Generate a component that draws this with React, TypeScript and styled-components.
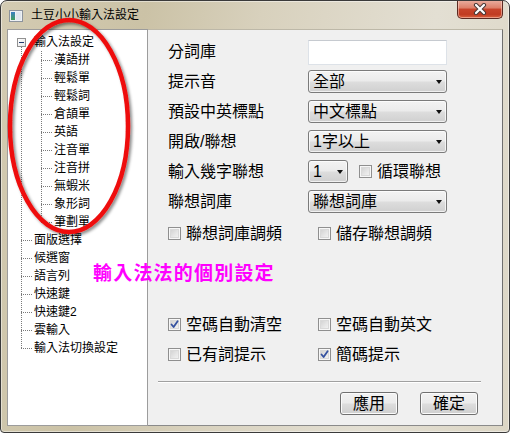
import React from 'react'
import styled, { createGlobalStyle } from 'styled-components'

const GlobalStyle = createGlobalStyle`
    html, body {
        margin: 0;
        padding: 0;
        background: #ffffff;
    }
    body {
        font-family: "Liberation Sans", "Noto Sans CJK TC", "Noto Sans CJK SC", sans-serif;
        color: #000;
    }
    * {
        box-sizing: border-box;
    }
`

const FONT = `"Liberation Sans", "Noto Sans CJK TC", "Noto Sans CJK SC", sans-serif`

const SWindow = styled.div`
    position: relative;
    width: 510px;
    height: 433px;
    border: 1px solid #3a3a3a;
    border-radius: 7px 7px 4px 4px;
    background: linear-gradient(100deg, #d3cbb2 0%, #cbc2a6 25%, #d8d1bd 45%, #e3dfd3 75%, #dcd6c5 100%);
    box-shadow: inset 0 0 0 1px rgba(255, 255, 255, 0.45);
    display: flex;
    flex-direction: column;
    overflow: hidden;
`

const STitleBar = styled.div`
    height: 28px;
    display: flex;
    align-items: flex-start;
    padding-left: 7px;
    flex-shrink: 0;
`

const STitleIcon = styled.svg`
    margin-top: 7px;
    width: 16px;
    height: 16px;
`

const STitle = styled.div`
    margin: 6px 0 0 7px;
    font-family: ${FONT};
    font-size: 12px;
    line-height: 17px;
    color: #000;
`

const SCloseButton = styled.div`
    margin: -1px 6px 0 auto;
    width: 46px;
    height: 19px;
    border: 1px solid #5b2a22;
    border-top: none;
    border-radius: 0 0 5px 5px;
    background: linear-gradient(#eab0a2 0%, #dc7e68 45%, #c8442b 50%, #c13b22 80%, #d9623f 100%);
    box-shadow: inset 0 0 0 1px rgba(255, 220, 210, 0.5);
    display: flex;
    align-items: center;
    justify-content: center;
`

const SBody = styled.div`
    flex: 1;
    display: flex;
    margin: 0 6px 6px 6px;
    min-height: 0;
`

const STree = styled.div`
    width: 141px;
    background: #ffffff;
    border: 1px solid #9c9c9c;
    padding-top: 3px;
    font-family: ${FONT};
    font-size: 12px;
`

const STopList = styled.div`
    position: relative;
    &::before {
        content: '';
        position: absolute;
        left: 13px;
        top: 14px;
        bottom: 9px;
        border-left: 1px dotted #7a7a7a;
    }
`

const SChildList = styled.div`
    position: relative;
    &::before {
        content: '';
        position: absolute;
        left: 33px;
        top: 0;
        bottom: 9px;
        border-left: 1px dotted #7a7a7a;
    }
`

const SRow = styled.div<{ $level: number; $root?: boolean }>`
    position: relative;
    height: 18px;
    line-height: 18px;
    white-space: nowrap;
    padding-left: ${(p) => (p.$level === 0 ? 26 : 46)}px;
    &::before {
        content: '';
        display: ${(p) => (p.$root ? 'none' : 'block')};
        position: absolute;
        top: 9px;
        left: ${(p) => (p.$level === 0 ? 13 : 33)}px;
        width: ${(p) => (p.$level === 0 ? 11 : 11)}px;
        border-top: 1px dotted #7a7a7a;
    }
`

const SExpander = styled.span`
    position: absolute;
    left: 9px;
    top: 5px;
    width: 9px;
    height: 9px;
    border: 1px solid #919191;
    background: linear-gradient(135deg, #ffffff, #e6e6e6);
    z-index: 1;
    &::after {
        content: '';
        position: absolute;
        left: 1px;
        top: 3px;
        width: 5px;
        height: 1px;
        background: #1e3a6e;
    }
`

const SPanel = styled.div`
    flex: 1;
    display: flex;
    flex-direction: column;
    background: #f0f0f0;
    border-top: 1px solid #bdb8a8;
    border-right: 1px solid #6f6f6f;
    border-bottom: 1px solid #8a8a8a;
    padding: 10px 0 10px 20px;
    font-family: ${FONT};
    font-size: 16px;
`

const SFormGrid = styled.div`
    display: grid;
    grid-template-columns: 140px 139px;
    grid-auto-rows: 23px;
    row-gap: 7px;
    align-items: center;
`

const SLabel = styled.div`
    line-height: 23px;
    white-space: nowrap;
`

const STextInput = styled.div`
    align-self: start;
    height: 25px;
    background: #ffffff;
    border: 1px solid #dde2e8;
    border-top-color: #c6cad0;
`

const SSelect = styled.div<{ $width?: number }>`
    position: relative;
    width: ${(p) => p.$width ?? 139}px;
    height: 23px;
    border: 1px solid #7b7b7b;
    border-radius: 3px;
    background: linear-gradient(#f3f3f3 0%, #ebebeb 48%, #dddddd 52%, #d0d0d0 100%);
    box-shadow: inset 0 0 0 1px rgba(255, 255, 255, 0.7);
    padding-left: 4px;
    line-height: 21px;
    white-space: nowrap;
    &::after {
        content: '';
        position: absolute;
        right: 4px;
        top: 9px;
        border-left: 3.5px solid transparent;
        border-right: 3.5px solid transparent;
        border-top: 4px solid #111;
    }
`

const SInline = styled.div`
    display: flex;
    align-items: center;
    gap: 11px;
    white-space: nowrap;
`

const SCheckRow = styled.label`
    display: flex;
    align-items: center;
    gap: 5px;
    height: 17px;
    line-height: 17px;
    white-space: nowrap;
`

const SBox = styled.span`
    position: relative;
    width: 13px;
    height: 13px;
    flex-shrink: 0;
    border: 1px solid #8f8f8f;
    background: linear-gradient(135deg, #cbcbcb 0%, #e8e8e8 60%, #f6f6f6 100%);
    box-shadow: inset 0 0 0 1px #f7f7f7, inset 0 0 0 2px #d9d9d9;
    svg {
        position: absolute;
        left: 0;
        top: 0;
    }
`

const SCheckGrid = styled.div<{ $gap: number }>`
    display: grid;
    grid-template-columns: 150px auto;
    row-gap: ${(p) => p.$gap}px;
`

const SBottom = styled.div`
    margin-top: auto;
    display: flex;
    flex-direction: column;
`

const SSeparator = styled.div`
    margin: 18px 21px 0 -10px;
    border-top: 1px solid #a0a0a0;
    border-bottom: 1px solid #ffffff;
`

const SButtons = styled.div`
    display: flex;
    justify-content: flex-end;
    gap: 22px;
    padding-right: 24px;
    margin-top: 9px;
`

const SButton = styled.div`
    width: 58px;
    height: 23px;
    border: 1px solid #707070;
    border-radius: 3px;
    background: linear-gradient(#f2f2f2 0%, #ebebeb 48%, #dddddd 52%, #cfcfcf 100%);
    box-shadow: inset 0 0 0 1px #fbfbfb;
    text-align: center;
    line-height: 21px;
`

const SOverlay = styled.svg`
    position: absolute;
    left: -1px;
    top: -1px;
    pointer-events: none;
    z-index: 5;
`

const SNote = styled.div`
    position: absolute;
    left: 92px;
    top: 259px;
    font-family: "Noto Sans CJK TC", "Noto Sans CJK SC", sans-serif;
    font-size: 19px;
    font-weight: 700;
    letter-spacing: 1.2px;
    line-height: 24px;
    color: #ff00ff;
    white-space: nowrap;
    z-index: 6;
`

const childItems = ['漢語拼', '輕鬆單', '輕鬆詞', '倉頡單', '英語', '注音單', '注音拼', '無蝦米', '象形詞', '筆劃單']
const topItems = ['面版選擇', '候選窗', '語言列', '快速鍵', '快速鍵2', '雲輸入', '輸入法切換設定']

const CheckBox: React.FC<{ checked?: boolean; label: string }> = ({ checked, label }) => (
    <SCheckRow>
        <SBox>
            {checked && (
                <svg width="11" height="11" viewBox="0 0 11 11">
                    <path d="M2.5 5.5 L4.6 8 L8.6 2.2" fill="none" stroke="#3552a0" strokeWidth="1.8" strokeLinecap="round" strokeLinejoin="round" />
                </svg>
            )}
        </SBox>
        {label}
    </SCheckRow>
)

const App: React.FC = () => {
    return (
        <>
            <GlobalStyle />
            <SWindow>
                <STitleBar>
                    <STitleIcon viewBox="0 0 16 16">
                        <defs>
                            <linearGradient id="ig" x1="0" y1="0" x2="0" y2="1">
                                <stop offset="0" stopColor="#3b7fc4" />
                                <stop offset="1" stopColor="#3f9f5c" />
                            </linearGradient>
                        </defs>
                        <rect x="1.5" y="2.5" width="13" height="11" fill="#eef1f4" stroke="#8c939c" />
                        <rect x="3" y="4" width="4" height="8" fill="url(#ig)" />
                        <rect x="8" y="4" width="5" height="8" fill="#dfe6ee" />
                    </STitleIcon>
                    <STitle>土豆小小輸入法設定</STitle>
                    <SCloseButton>
                        <svg width="14" height="12" viewBox="0 0 14 12">
                            <path d="M3 2 L11 10 M11 2 L3 10" stroke="#4a3a38" strokeWidth="4.2" strokeLinecap="round" />
                            <path d="M3 2 L11 10 M11 2 L3 10" stroke="#ffffff" strokeWidth="2.2" strokeLinecap="round" />
                        </svg>
                    </SCloseButton>
                </STitleBar>
                <SBody>
                    <STree>
                        <STopList>
                            <div>
                                <SRow $level={0} $root>
                                    <SExpander />
                                    輸入法設定
                                </SRow>
                                <SChildList>
                                    {childItems.map((c) => (
                                        <SRow $level={1} key={c}>{c}</SRow>
                                    ))}
                                </SChildList>
                            </div>
                            {topItems.map((t) => (
                                <SRow $level={0} key={t}>{t}</SRow>
                            ))}
                        </STopList>
                    </STree>
                    <SPanel>
                        <SFormGrid>
                            <SLabel>分詞庫</SLabel>
                            <STextInput />
                            <SLabel>提示音</SLabel>
                            <SSelect>全部</SSelect>
                            <SLabel>預設中英標點</SLabel>
                            <SSelect>中文標點</SSelect>
                            <SLabel>開啟/聯想</SLabel>
                            <SSelect>1字以上</SSelect>
                            <SLabel>輸入幾字聯想</SLabel>
                            <SInline>
                                <SSelect $width={40}>1</SSelect>
                                <CheckBox label="循環聯想" />
                            </SInline>
                            <SLabel>聯想詞庫</SLabel>
                            <SSelect>聯想詞庫</SSelect>
                        </SFormGrid>
                        <SCheckGrid $gap={13} style={{ marginTop: 12 }}>
                            <CheckBox label="聯想詞庫調頻" />
                            <CheckBox label="儲存聯想調頻" />
                        </SCheckGrid>
                        <SBottom>
                            <SCheckGrid $gap={13}>
                                <CheckBox checked label="空碼自動清空" />
                                <CheckBox label="空碼自動英文" />
                                <CheckBox label="已有詞提示" />
                                <CheckBox checked label="簡碼提示" />
                            </SCheckGrid>
                            <SSeparator />
                            <SButtons>
                                <SButton>應用</SButton>
                                <SButton>確定</SButton>
                            </SButtons>
                        </SBottom>
                    </SPanel>
                </SBody>
                <SOverlay width="510" height="433" viewBox="0 0 510 433">
                    <defs>
                        <filter id="sh" x="-20%" y="-20%" width="140%" height="140%">
                            <feDropShadow dx="2" dy="2" stdDeviation="1.6" floodColor="#000" floodOpacity="0.45" />
                        </filter>
                    </defs>
                    <ellipse cx="69" cy="126" rx="59" ry="106" fill="none" stroke="#ee1111" strokeWidth="4.5" filter="url(#sh)" />
                </SOverlay>
                <SNote>輸入法法的個別設定</SNote>
            </SWindow>
        </>
    )
}

export default App
